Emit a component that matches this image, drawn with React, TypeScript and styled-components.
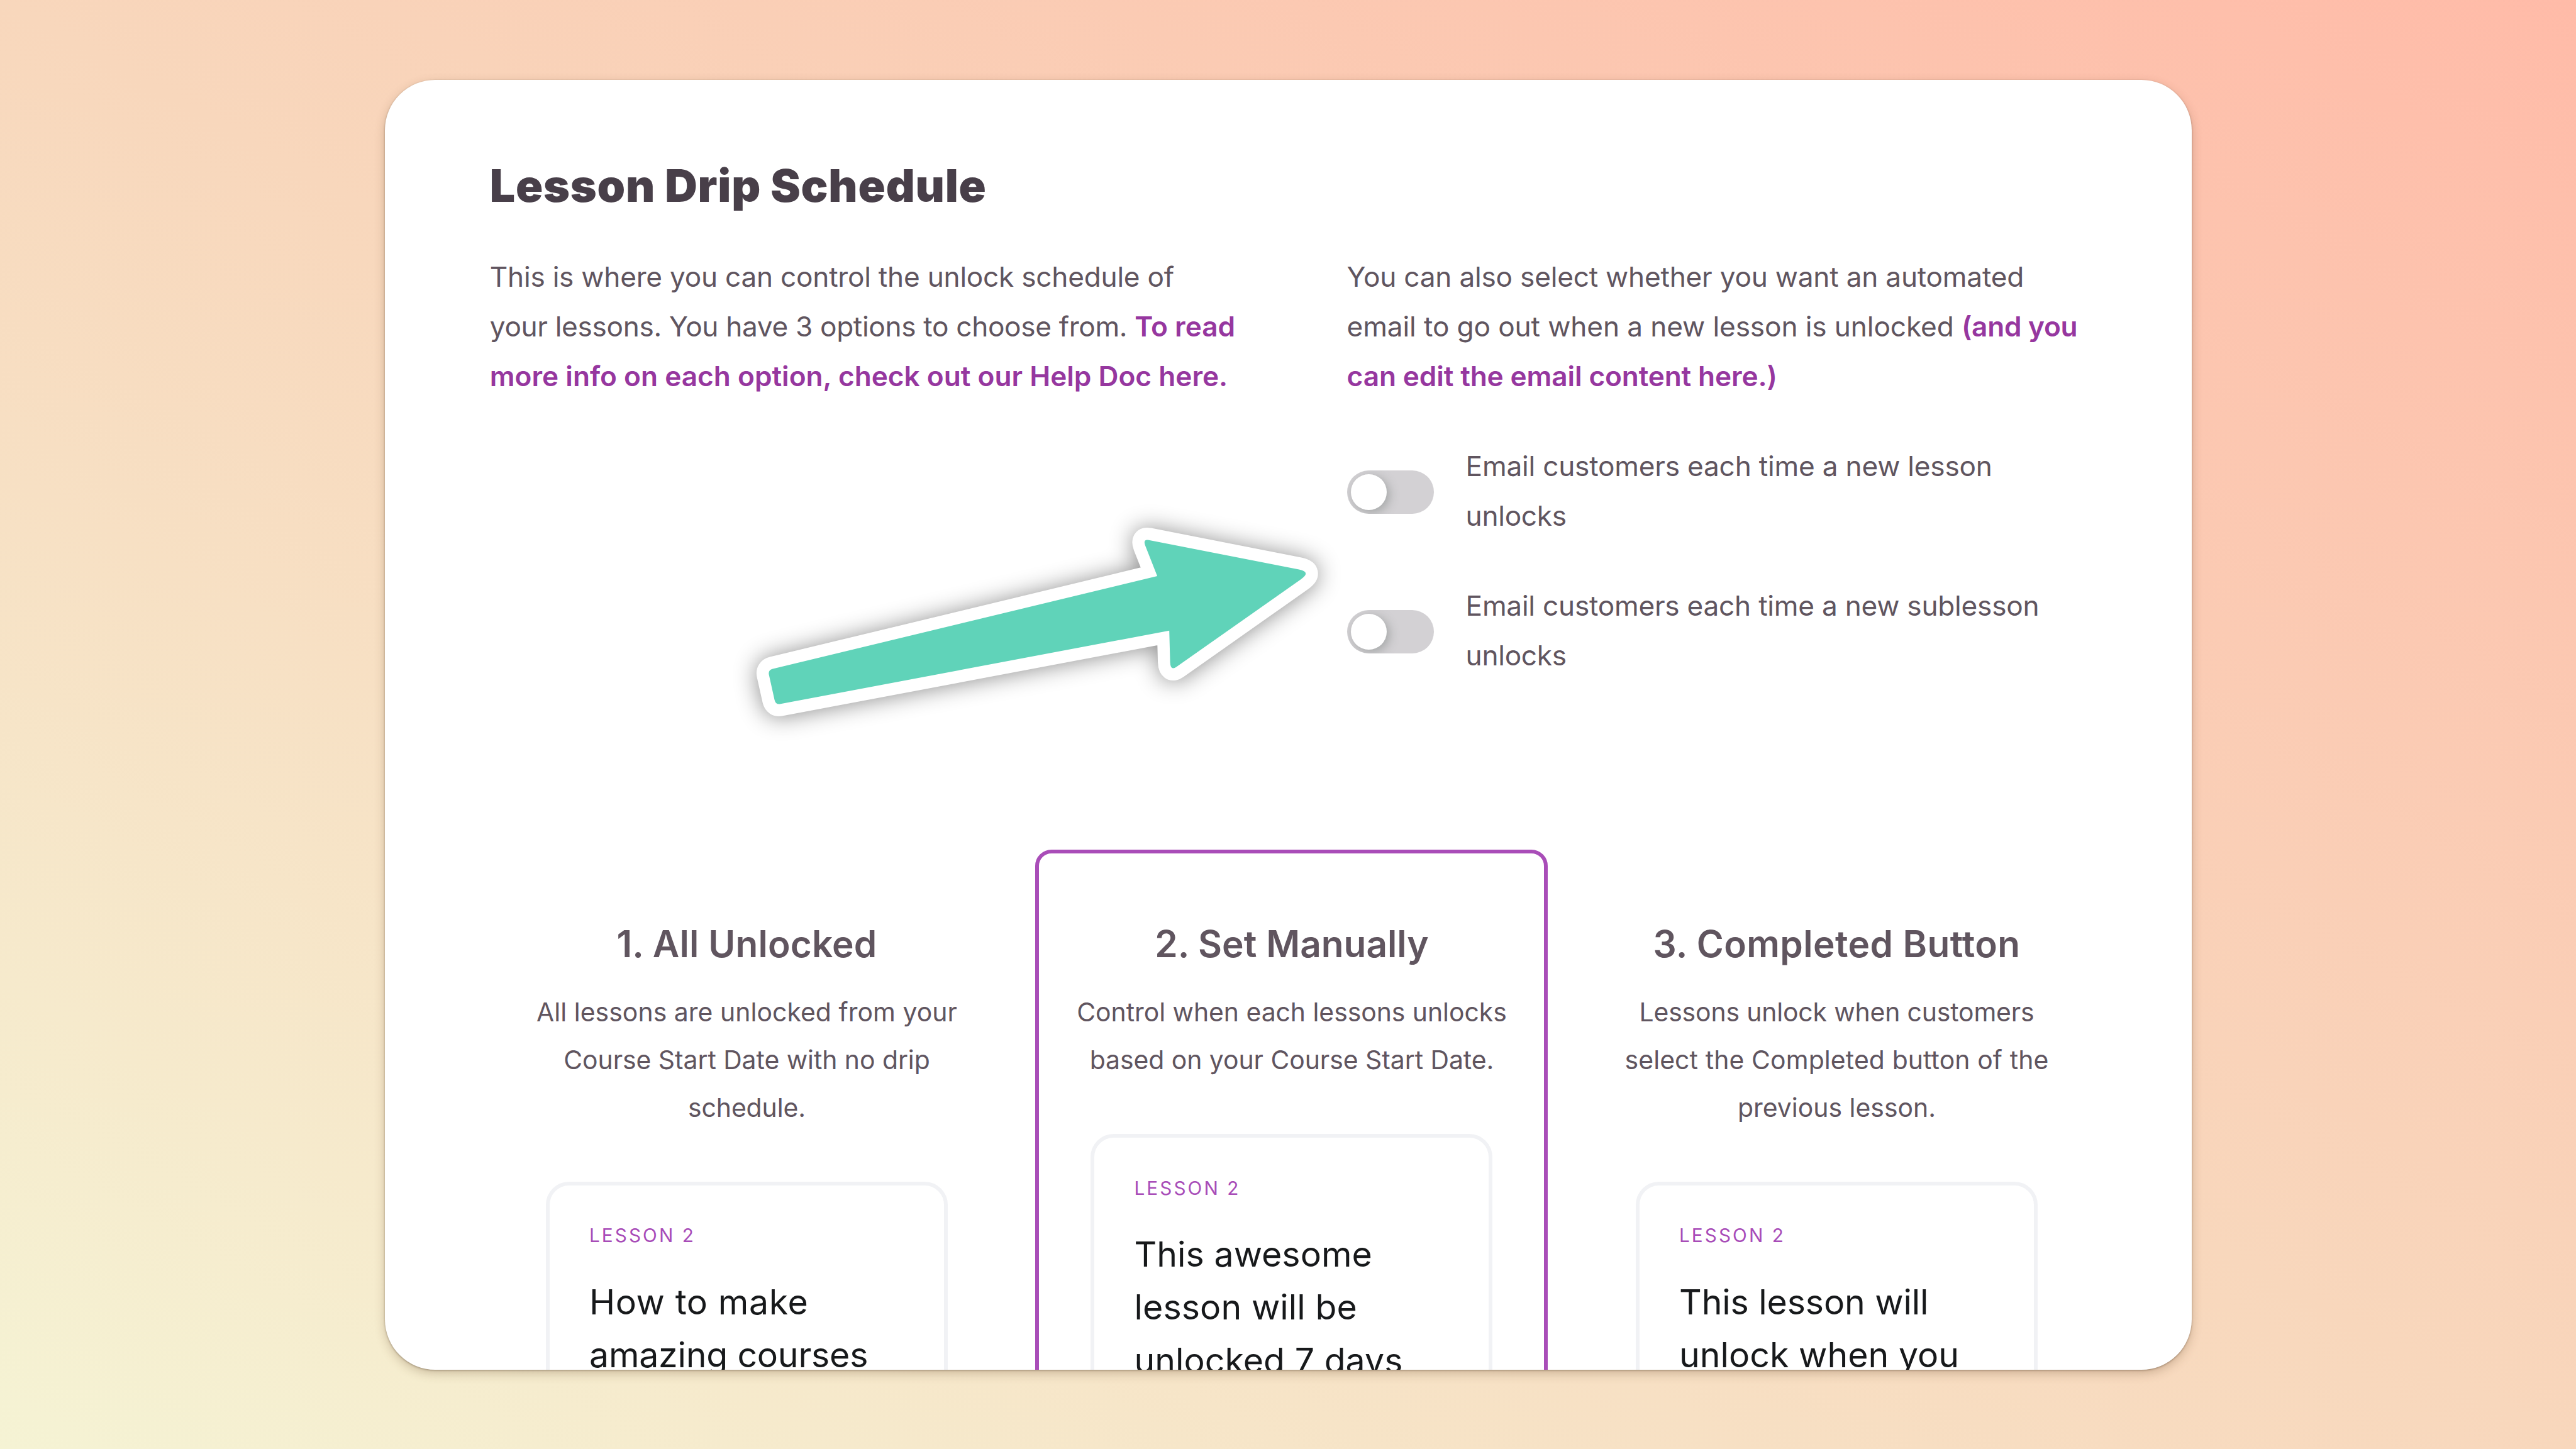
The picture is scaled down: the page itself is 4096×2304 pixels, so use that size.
import { useState } from "react"
import styled, { createGlobalStyle } from "styled-components"

type LineData = { text: string; tracking?: number }

type Option = {
    title: string;
    titleTracking: number;
    description: LineData[];
    lesson: LineData[];
}

const toggles: LineData[][] = [
    [{ text: "Email customers each time a new lesson", tracking: -0.22 }, { text: "unlocks", tracking: -0.3 }],
    [{ text: "Email customers each time a new sublesson", tracking: -0.25 }, { text: "unlocks", tracking: -0.3 }],
]

const options: Option[] = [
    {
        title: "1. All Unlocked",
        titleTracking: 0.15,
        description: [
            { text: "All lessons are unlocked from your", tracking: 0.05 },
            { text: "Course Start Date with no drip", tracking: -0.05 },
            { text: "schedule.", tracking: -0.1 },
        ],
        lesson: [
            { text: "How to make", tracking: 0.6 },
            { text: "amazing courses", tracking: -0.2 },
        ],
    },
    {
        title: "2. Set Manually",
        titleTracking: 0.02,
        description: [
            { text: "Control when each lessons unlocks", tracking: -0.04 },
            { text: "based on your Course Start Date.", tracking: -0.04 },
        ],
        lesson: [
            { text: "This awesome", tracking: 0.05 },
            { text: "lesson will be", tracking: 0.1 },
            { text: "unlocked 7 days", tracking: 0.05 },
        ],
    },
    {
        title: "3. Completed Button",
        titleTracking: 0.4,
        description: [
            { text: "Lessons unlock when customers", tracking: -0.15 },
            { text: "select the Completed button of the", tracking: 0.12 },
            { text: "previous lesson.", tracking: 0.02 },
        ],
        lesson: [
            { text: "This lesson will", tracking: -0.1 },
            { text: "unlock when you", tracking: 0.05 },
        ],
    },
]

const Lines = ({ items }: { items: LineData[] }) => (
    <>
        {items.map((x) => (
            <Line key={x.text} $tracking={x.tracking}>{x.text}</Line>
        ))}
    </>
)

const Arrow = () => (
    <ArrowSvg viewBox="0 0 980 380">
        <path
            d="M62.7 273.1Q61 265.3 68.8 263.4L680.1 116L661.2 68Q656.8 56.8 666.6 58.7L905.5 105.6Q925.1 109.4 908.8 120.9L710.8 260.3Q701 267.2 700.6 253L699.2 202.7L81.2 319.2Q73.3 320.7 71.6 312.9Z"
            fill="#60d3b9"
            stroke="#fff"
            strokeWidth="39"
            strokeLinejoin="round"
            paintOrder="stroke"
        />
    </ArrowSvg>
)

const App: React.FC = () => {
    const [enabled, setEnabled] = useState([false, false]);
    const [selected, setSelected] = useState(1);

    const onToggle = (index: number) => {
        setEnabled(enabled.map((x, i) => (i === index ? !x : x)));
    }

    return (
        <Page>
            <GlobalStyle />
            <Panel>
                <Heading>Lesson Drip Schedule</Heading>
                <Intro>
                    <Paragraph>
                        <Line $tracking={-0.25}>This is where you can control the unlock schedule of</Line>
                        <Line $tracking={-0.34}>your lessons. You have 3 options to choose from. <Link>To read</Link></Line>
                        <Line><Link>more info on each option, check out our Help Doc here.</Link></Line>
                    </Paragraph>
                    <Settings>
                        <Paragraph>
                            <Line $tracking={-0.23}>You can also select whether you want an automated</Line>
                            <Line $tracking={-0.12}>email to go out when a new lesson is unlocked <Link $tracking={-0.3}>(and you</Link></Line>
                            <Line><Link $tracking={-0.13}>can edit the email content here.)</Link></Line>
                        </Paragraph>
                        {toggles.map((label, i) => (
                            <ToggleRow key={i}>
                                <Toggle role="switch" aria-checked={enabled[i]} $on={enabled[i]} onClick={() => onToggle(i)}>
                                    <Knob />
                                </Toggle>
                                <Paragraph><Lines items={label} /></Paragraph>
                            </ToggleRow>
                        ))}
                    </Settings>
                </Intro>
                <Options>
                    {options.map((option, i) => (
                        <OptionBox key={option.title} $selected={selected === i} onClick={() => setSelected(i)}>
                            <OptionTitle $tracking={option.titleTracking}>{option.title}</OptionTitle>
                            <Description><Lines items={option.description} /></Description>
                            <LessonCard>
                                <LessonLabel>LESSON 2</LessonLabel>
                                <LessonTitle><Lines items={option.lesson} /></LessonTitle>
                            </LessonCard>
                        </OptionBox>
                    ))}
                </Options>
                <Arrow />
            </Panel>
        </Page>
    )
}

export default App

const GlobalStyle = createGlobalStyle`
    * {
        box-sizing: border-box;
    }
    body {
        margin: 0;
        font-family: Inter, "Open Sans", sans-serif;
        font-weight: 430;
    }
`

const Page = styled.div`
    display: flex;
    align-items: center;
    justify-content: center;
    width: 4096px;
    height: 2304px;
    overflow: hidden;
    background: linear-gradient(to top right, #f5f3d4 0%, #f8d7bc 50%, #ffbba8 100%);
`

const Panel = styled.main`
    position: relative;
    width: 2873px;
    height: 2051px;
    padding: 125px 157px 0 167.3px;
    overflow: hidden;
    border-radius: 80px;
    background: #fff;
    box-shadow: 0 1px 3px rgba(70, 50, 30, 0.4), 0 6px 18px -2px rgba(90, 60, 30, 0.32);
`

const Heading = styled.h1`
    margin: 0 0 63.9px;
    font-size: 71.4px;
    line-height: 86px;
    font-weight: 900;
    letter-spacing: 0.8px;
    color: #483f49;
`

const Intro = styled.section`
    display: grid;
    grid-template-columns: 1187px 1187px;
    column-gap: 175.8px;
    height: 680px;
`

const Settings = styled.div`
    display: flex;
    flex-direction: column;
    gap: 63.8px;
`

const Paragraph = styled.div`
    font-size: 44.2px;
    line-height: 79px;
    color: #60555f;
`

const Line = styled.span<{ $tracking?: number }>`
    display: block;
    white-space: nowrap;
    letter-spacing: ${(p) => p.$tracking ?? 0}px;
`

const Link = styled.a<{ $tracking?: number }>`
    font-weight: 600;
    letter-spacing: ${(p) => p.$tracking ?? 0}px;
    color: #96379f;
    cursor: pointer;
`

const ToggleRow = styled.div`
    display: flex;
    align-items: center;
    gap: 51px;
`

const Toggle = styled.button<{ $on: boolean }>`
    display: flex;
    align-items: center;
    justify-content: ${(p) => (p.$on ? "flex-end" : "flex-start")};
    width: 138px;
    height: 69px;
    margin-top: 3px;
    padding: 0 6px;
    border: none;
    border-radius: 35px;
    overflow: hidden;
    background: ${(p) => (p.$on ? "#a84cb8" : "#d3d1d4")};
`

const Knob = styled.span`
    width: 57px;
    height: 57px;
    border-radius: 50%;
    background: #fff;
    box-shadow: 4px 4px 16px rgba(90, 100, 95, 0.4);
`

const Options = styled.section`
    display: grid;
    grid-template-columns: repeat(3, 815px);
    column-gap: 51.5px;
    margin-top: 270px;
    margin-left: 1.2px;
`

const OptionBox = styled.article<{ $selected: boolean }>`
    display: flex;
    flex-direction: column;
    align-items: center;
    height: 1100px;
    padding-top: 105.4px;
    border: 6px solid ${(p) => (p.$selected ? "#a94db8" : "transparent")};
    border-radius: 26px;
`

const OptionTitle = styled.h2<{ $tracking: number }>`
    margin: 0 0 33.4px;
    font-size: 58.5px;
    line-height: 76px;
    font-weight: 600;
    letter-spacing: ${(p) => p.$tracking}px;
    color: #60555f;
`

const Description = styled.div`
    margin-bottom: 79.2px;
    font-size: 40.9px;
    line-height: 75.9px;
    text-align: center;
    color: #60555f;
`

const LessonCard = styled.div`
    width: 639px;
    height: 800px;
    padding: 55.4px 63px 0;
    border: 6px solid #f1f2f5;
    border-radius: 37px;
`

const LessonLabel = styled.div`
    margin-bottom: 39.4px;
    font-size: 29.7px;
    line-height: 48px;
    letter-spacing: 3.1px;
    color: #a84cb8;
`

const LessonTitle = styled.div`
    font-size: 55.4px;
    line-height: 84.3px;
    color: #17191b;
`

// Teal callout pointing at the email toggles, laid over the panel
const ArrowSvg = styled.svg`
    position: absolute;
    left: 548.5px;
    top: 673.6px;
    width: 980px;
    height: 380px;
    overflow: visible;
    pointer-events: none;
    filter: drop-shadow(0 1px 18px rgba(0, 0, 0, 0.45));
`
